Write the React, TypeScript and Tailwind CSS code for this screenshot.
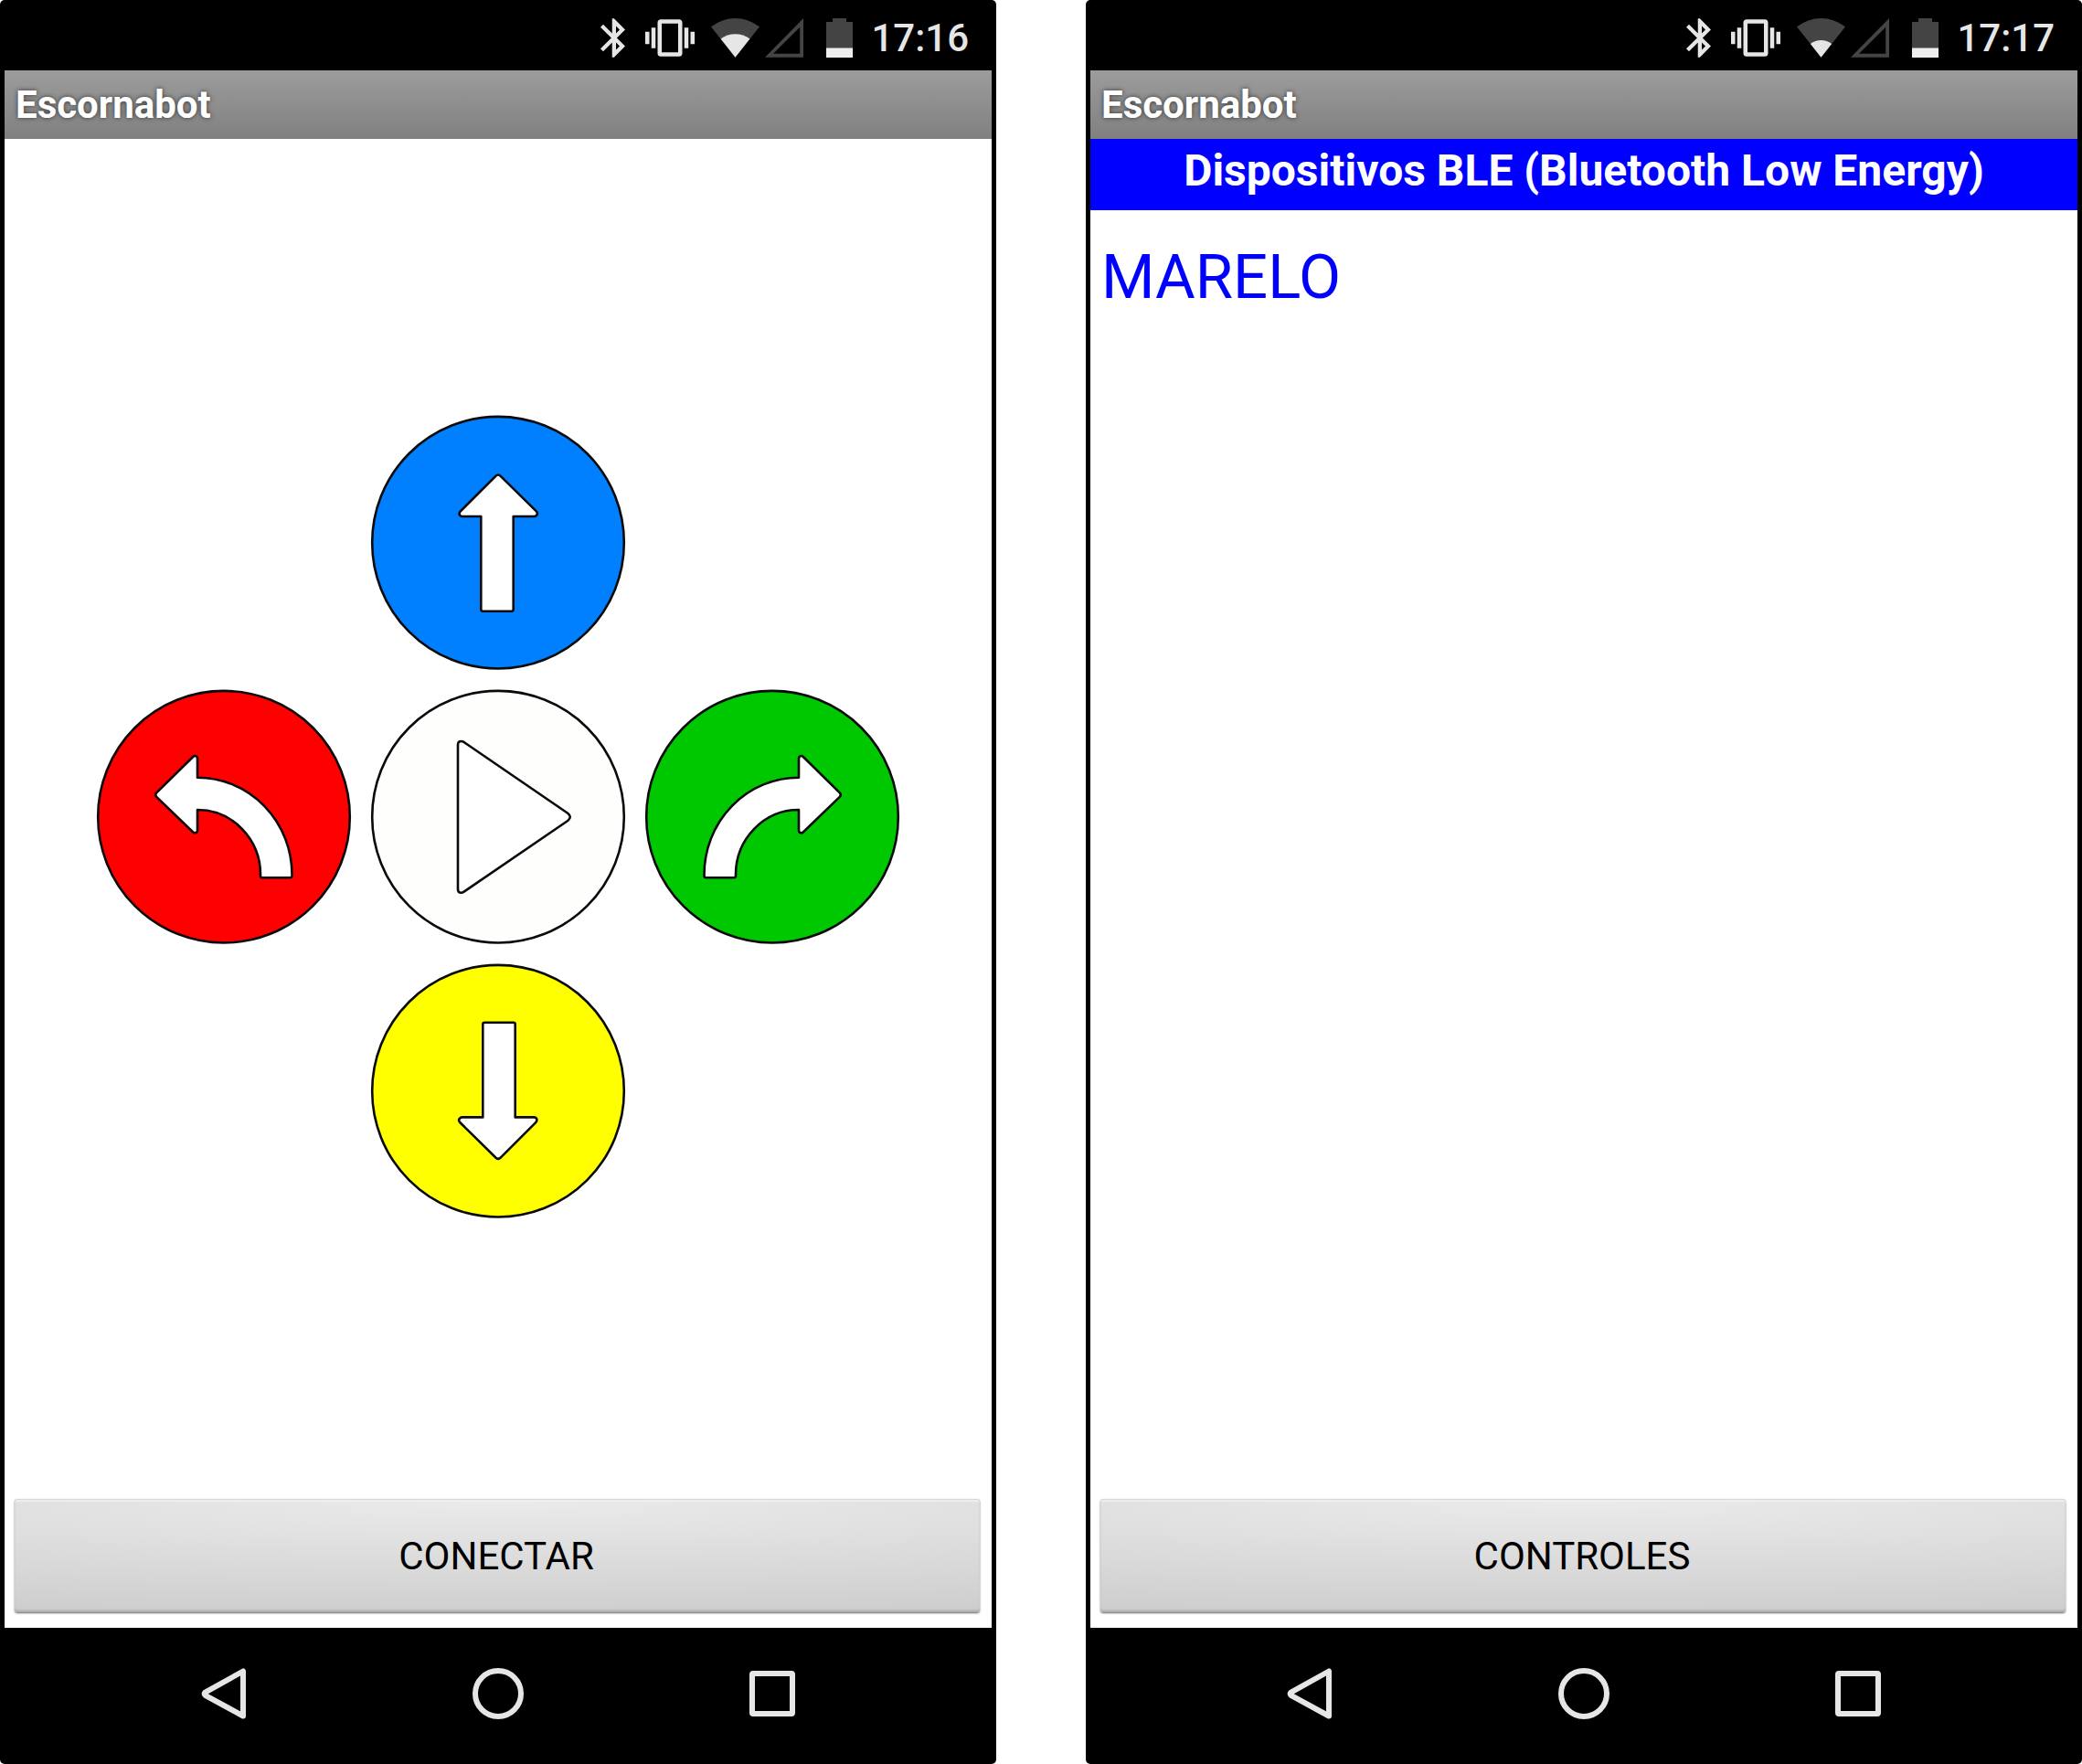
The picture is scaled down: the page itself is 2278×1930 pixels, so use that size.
import type { ReactNode } from "react";

const UP_ARROW =
  "M147.6 76.6 Q150 74.4 152.4 76.6 L191.8 115.4 Q193.8 117.8 192.2 119.6 Q191 121 189.4 121 H166.7 V222.7 Q166.7 224.7 164.7 224.7 H133.3 Q131.3 224.7 131.3 222.7 V121 H110.6 Q109 121 108 119.6 Q107 117.6 108.6 115.6 Z";

const LEFT_ARROW =
  "M76 123.6 Q74.4 125.6 76 127.6 L116 166.2 Q118 168 119.6 167 Q121 166.2 121 164.6 V142 A69 71 0 0 1 190 213 V214.3 Q190 216.3 192 216.3 H222.3 Q224.5 216.3 224.5 214.3 V213 A103.5 106.3 0 0 0 121 106.7 V86 Q121 83.8 119.4 83.2 Q117.8 82.6 116.2 84 Z";

const PLAY =
  "M106 71 Q106 67 109.4 67 Q111 67 113 68.2 L226.2 145.8 Q228.8 148 228.8 149.8 Q228.8 151.8 226.2 154 L113 231.4 Q111 232.8 109.4 232.8 Q106 232.8 106 229 Z";

function RoundControl({
  label,
  fill,
  path,
  transform,
  className = "",
}: {
  label: string;
  fill: string;
  path: string;
  transform?: string;
  className?: string;
}) {
  return (
    <button type="button" aria-label={label} className={`block size-[300px] cursor-pointer ${className}`}>
      <svg viewBox="0 0 300 300" className="size-full" aria-hidden="true">
        <circle cx="150" cy="149.7" r="137.8" fill={fill} stroke="#0a0a0a" strokeWidth="2.6" />
        <path
          d={path}
          transform={transform}
          fill="#fff"
          stroke="#0a0a0a"
          strokeWidth="2.6"
          strokeLinejoin="round"
        />
      </svg>
    </button>
  );
}

function WifiIcon({ full }: { full: boolean }) {
  return (
    <svg viewBox="0 0 53 43" className="h-[43px] w-[53px]" aria-hidden="true">
      <path d="M26.5 42.7 L0 9.3 A42.7 42.7 0 0 1 53 9.3 Z" fill="#444" />
      {full ? (
        <path d="M26.5 42.7 L10.6 22.6 A26 26 0 0 1 42.4 22.6 Z" fill="#e6e6e6" />
      ) : (
        <path d="M26.5 42.7 L14.9 28 A18.7 18.7 0 0 1 38.1 28 Z" fill="#e6e6e6" />
      )}
    </svg>
  );
}

function StatusBar({ time, strongWifi }: { time: string; strongWifi: boolean }) {
  return (
    <header className="flex h-[77px] shrink-0 items-center justify-end bg-black pt-1.5 pr-[25px] text-[#e6e6e6]">
      <svg viewBox="5 2 12.71 20" className="mr-[22px] h-[43px] w-[27px]" fill="currentColor" aria-hidden="true">
        <path d="M17.71 7.71L12 2h-1v7.59L6.41 5 5 6.41 10.59 12 5 17.59 6.41 19 11 14.41V22h1l5.71-5.71-4.3-4.29 4.3-4.29zM13 5.83l1.88 1.88L13 9.59V5.83zm1.88 10.46L13 18.17v-3.76l1.88 1.88z" />
      </svg>
      <svg viewBox="0 2.5 24 19" className="mr-[18px] h-[43px] w-[54px]" fill="currentColor" aria-hidden="true">
        <path d="M0 15h2V9H0v6zm3 2h2V7H3v10zm19-8v6h2V9h-2zm-3 8h2V7h-2v10zM16.5 3h-9C6.67 3 6 3.67 6 4.5v15c0 .83.67 1.5 1.5 1.5h9c.83 0 1.5-.67 1.5-1.5v-15c0-.83-.67-1.5-1.5-1.5zM16 19H8V5h8v14z" />
      </svg>
      <WifiIcon full={strongWifi} />
      <svg viewBox="0 0 42 43" className="mr-[25px] ml-1.5 h-[43px] w-[42px]" aria-hidden="true">
        <path d="M0 42.7 L42 0 V42.7 Z M9 38.8 H38.2 V9.8 Z" fill="#444" fillRule="evenodd" />
      </svg>
      <svg viewBox="0 0 29 43" className="mr-5 h-[43px] w-[29px]" aria-hidden="true">
        <path d="M7 0 H22 V4 H29 V43 H0 V4 H7 Z" fill="#444" />
        <path d="M0 32.5 H29 V43.5 H0 Z" fill="#eee" />
      </svg>
      <time className="text-[42px] leading-[44px] font-medium">{time}</time>
    </header>
  );
}

function NavBar() {
  return (
    <nav className="flex h-[149px] shrink-0 items-center justify-center bg-black pb-1.5 text-[#e6e6e6]">
      <button type="button" aria-label="Atrás" className="flex w-[300px] cursor-pointer justify-center">
        <svg viewBox="0 0 56 56" className="size-14" fill="none" stroke="currentColor" strokeWidth="6" aria-hidden="true">
          <path d="M49 3.5 V52.5 L7.5 29.8 Q6 28.2 7.5 26.6 Z" strokeLinejoin="round" />
        </svg>
      </button>
      <button type="button" aria-label="Inicio" className="flex w-[300px] cursor-pointer justify-center">
        <svg viewBox="0 0 56 56" className="size-14" fill="none" stroke="currentColor" strokeWidth="6" aria-hidden="true">
          <circle cx="28" cy="28" r="25" />
        </svg>
      </button>
      <button type="button" aria-label="Recientes" className="flex w-[300px] cursor-pointer justify-center">
        <svg viewBox="0 0 56 56" className="size-14" fill="none" stroke="currentColor" strokeWidth="6" aria-hidden="true">
          <rect x="6" y="6" width="44" height="44" rx="1" />
        </svg>
      </button>
    </nav>
  );
}

function Phone({
  time,
  strongWifi,
  action,
  children,
}: {
  time: string;
  strongWifi: boolean;
  action: string;
  children: ReactNode;
}) {
  return (
    <section className="flex flex-1 flex-col overflow-hidden rounded-[5px] bg-black px-[5px]">
      <StatusBar time={time} strongWifi={strongWifi} />
      <h1 className="flex h-[75px] shrink-0 items-center bg-linear-to-b from-[#9c9c9c] to-[#808080] px-3 text-[42px] leading-[50px] font-bold text-white [text-shadow:0_0_5px_#333]">
        Escornabot
      </h1>
      <main className="flex flex-1 flex-col bg-white">
        <div className="flex flex-1 flex-col">{children}</div>
        <div className="pt-1 pr-[13px] pb-[17px] pl-[11px]">
          <button
            type="button"
            className="h-[124px] w-full cursor-pointer rounded-[3px] bg-[radial-gradient(140%_100%_at_50%_0%,#ebebeb,#cfcfcf)] pt-0.5 pr-0.5 text-[42px] leading-[50px] text-black shadow-[inset_0_-3px_3px_-1px_#a8a8a8,inset_0_1px_1px_#d4d4d4,inset_0_3px_1px_#f0f0f0,0_1px_2px_#666]"
          >
            {action}
          </button>
        </div>
      </main>
      <NavBar />
    </section>
  );
}

export default function App() {
  return (
    <div className="flex min-h-screen gap-[98px] bg-white font-['Roboto',sans-serif]">
      <Phone time="17:16" strongWifi action="CONECTAR">
        <div className="grid flex-1 grid-cols-[repeat(3,300px)] content-center justify-center">
          <RoundControl label="Adelante" fill="#0080ff" path={UP_ARROW} className="col-start-2" />
          <RoundControl label="Izquierda" fill="#ff0000" path={LEFT_ARROW} className="col-start-1" />
          <RoundControl label="Ejecutar" fill="#fefefc" path={PLAY} />
          <RoundControl
            label="Derecha"
            fill="#00c800"
            path={LEFT_ARROW}
            transform="matrix(-1 0 0 1 300 0)"
          />
          <RoundControl
            label="Atrás"
            fill="#ffff00"
            path={UP_ARROW}
            transform="rotate(180 150 149.7)"
            className="col-start-2"
          />
        </div>
      </Phone>
      <Phone time="17:17" strongWifi={false} action="CONTROLES">
        <h2 className="h-[78px] bg-[#0000ff] pt-[7px] text-center text-[48px] leading-[56px] font-bold text-white">
          Dispositivos BLE (Bluetooth Low Energy)
        </h2>
        <ul className="pt-[33px] pl-3">
          <li>
            <button type="button" className="cursor-pointer text-[67px] leading-[80px] text-[#0000ff]">
              MARELO
            </button>
          </li>
        </ul>
      </Phone>
    </div>
  );
}
